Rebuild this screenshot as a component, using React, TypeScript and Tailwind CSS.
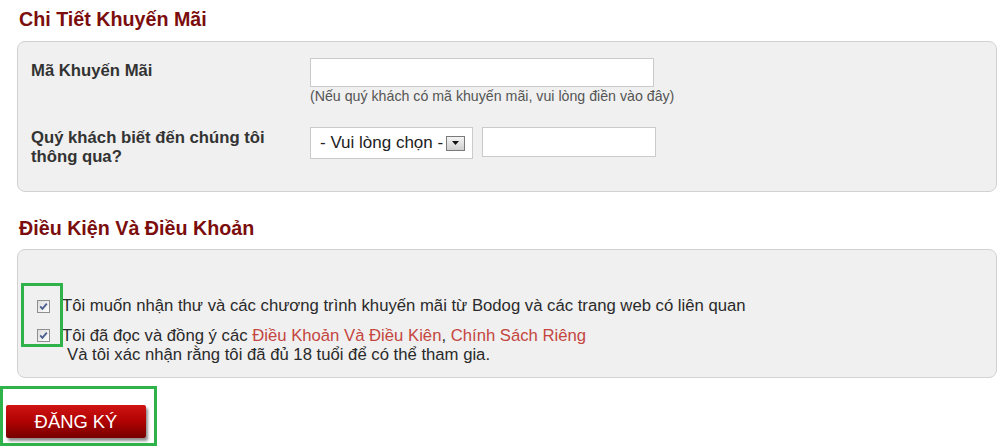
import React from "react";

const Checkbox = () => (
  <svg width="13" height="13" viewBox="0 0 13 13" className="shrink-0">
    <defs>
      <linearGradient id="cbg" x1="0" y1="0" x2="1" y2="1">
        <stop offset="0" stopColor="#dcdcdc" />
        <stop offset="1" stopColor="#ffffff" />
      </linearGradient>
    </defs>
    <rect x="0.5" y="0.5" width="12" height="12" fill="url(#cbg)" stroke="#8e8f8f" />
    <path d="M3.2 6.4 L5.4 8.8 L9.8 3.6" fill="none" stroke="#4a5d8c" strokeWidth="1.8" />
  </svg>
);

const SelectArrow = () => (
  <span className="flex h-[15px] w-[19px] items-center justify-center border border-[#7a7a7a] bg-gradient-to-b from-[#f4f4f4] to-[#cfcfcf]">
    <svg width="7" height="4" viewBox="0 0 7 4">
      <path d="M0 0 H7 L3.5 4 Z" fill="#111" />
    </svg>
  </span>
);

export default function App() {
  return (
    <div className="relative h-[448px] w-[1004px] overflow-hidden bg-white font-['Liberation_Sans',Arial,sans-serif]">
      <div className="pl-[17px] pr-[7px]">
        <h2 className="h-[41px] pl-[2px] pt-[8px] text-[19.7px] font-bold leading-[23px] text-[#7b0d0d]">
          Chi Tiết Khuyến Mãi
        </h2>

        <div className="h-[151px] rounded-[8px] border border-[#d2d2d2] bg-[#f0f0f0] pl-[13px] pt-[16px]">
          <div className="flex">
            <div className="w-[279px] pt-[3px] text-[16.7px] font-bold leading-[19px] text-[#333]">
              Mã Khuyến Mãi
            </div>
            <div>
              <div className="h-[29px] w-[344px] border border-[#cbcbcb] bg-white" />
              <div className="mt-[1px] text-[14.2px] leading-[16px] text-[#555]">
                (Nếu quý khách có mã khuyến mãi, vui lòng điền vào đây)
              </div>
            </div>
          </div>

          <div className="mt-[23px] flex">
            <div className="w-[279px] pt-[1px] text-[16.7px] font-bold leading-[19px] text-[#333]">
              Quý khách biết đến chúng tôi
              <br />
              thông qua?
            </div>
            <div className="flex items-start gap-[9px]">
              <div className="flex h-[32px] w-[163px] items-center justify-between border border-[#cbcbcb] bg-white pl-[9px] pr-[7px]">
                <span className="text-[17px] leading-[20px] text-[#222]">- Vui lòng chọn -</span>
                <SelectArrow />
              </div>
              <div className="h-[30px] w-[174px] border border-[#cbcbcb] bg-white" />
            </div>
          </div>
        </div>

        <h2 className="h-[57px] pl-[2px] pt-[25px] text-[19.7px] font-bold leading-[23px] text-[#7b0d0d]">
          Điều Kiện Và Điều Khoản
        </h2>

        <div className="relative h-[129px] rounded-[8px] border border-[#d2d2d2] bg-[#f0f0f0] pl-[19px] pt-[46px] text-[16.7px] text-[#2a2a2a]">
          <div className="flex h-[20px] items-center gap-[12px] leading-[20px]">
            <Checkbox />
            <span>Tôi muốn nhận thư và các chương trình khuyến mãi từ Bodog và các trang web có liên quan</span>
          </div>
          <div className="mt-[10px] flex items-start gap-[12px] leading-[19px]">
            <span className="pt-[3px]">
              <Checkbox />
            </span>
            <div>
              <div>
                Tôi đã đọc và đồng ý các{" "}
                <span className="text-[#c4463f]">Điều Khoản Và Điều Kiên</span>,{" "}
                <span className="text-[#c4463f]">Chính Sách Riêng</span>
              </div>
              <div className="pl-[5px]">Và tôi xác nhận rằng tôi đã đủ 18 tuổi để có thể tham gia.</div>
            </div>
          </div>

          <div className="absolute left-[3px] top-[33px] h-[64px] w-[42px] border-[3px] border-[#2fb24a]" />
        </div>
      </div>

      <div className="relative mt-[27px] pl-[6px]">
        <button className="h-[33px] w-[140px] rounded-[2px] bg-gradient-to-b from-[#d01414] via-[#b00202] to-[#760000] text-[18.4px] leading-[33px] text-white shadow-[2px_3px_3px_rgba(0,0,0,0.45)]">
          ĐĂNG KÝ
        </button>
        <div className="absolute left-0 top-[-19px] h-[60px] w-[157px] border-[3px] border-[#2fb24a]" />
      </div>
    </div>
  );
}
